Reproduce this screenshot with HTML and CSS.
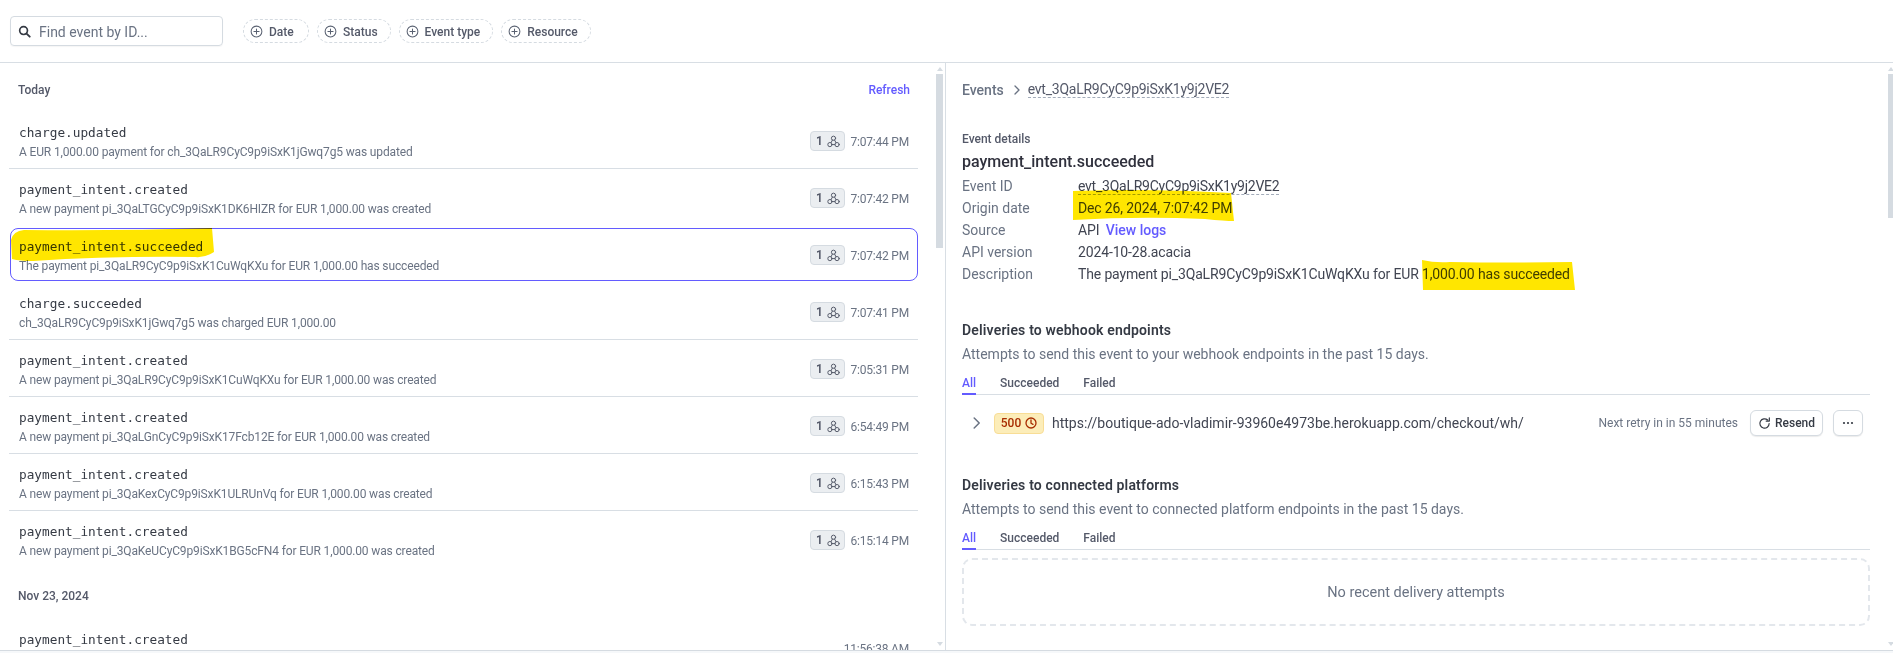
FILE: index.html
```html
<!DOCTYPE html>
<html lang="en">
<head>
<meta charset="utf-8">
<title>Events</title>
<link rel="stylesheet" href="styles.css">
</head>
<body>
<svg width="0" height="0" class="defs">
  <defs>
    <symbol id="hook" viewBox="0 0 16 16">
      <g fill="none" stroke="currentColor" stroke-width="1.2" stroke-linecap="round">
        <circle cx="8" cy="4" r="2.6"/>
        <circle cx="3.6" cy="11.8" r="2.6"/>
        <circle cx="12.4" cy="11.8" r="2.6"/>
        <path d="M6.7 6.2 4.9 9.5M9.3 6.2l1.8 3.3M6.2 11.8h3.6"/>
      </g>
    </symbol>
    <symbol id="plus" viewBox="0 0 14 14">
      <g fill="none" stroke="currentColor" stroke-width="1.1" stroke-linecap="round">
        <circle cx="7" cy="7" r="5.8"/>
        <path d="M7 4.2v5.6M4.2 7h5.6"/>
      </g>
    </symbol>
  </defs>
</svg>

<div class="app">
  <header class="topbar">
    <label class="search">
      <svg class="search-icon" viewBox="0 0 14 14"><circle cx="6" cy="6" r="4.2" fill="none" stroke="currentColor" stroke-width="1.8"/><path d="M9.2 9.2 12.6 12.6" stroke="currentColor" stroke-width="2" stroke-linecap="round"/></svg>
      <span class="search-placeholder">Find event by ID...</span>
    </label>
    <div class="chips">
      <span class="chip chip-date"><svg class="chip-icon"><use href="#plus"/></svg>Date</span>
      <span class="chip"><svg class="chip-icon"><use href="#plus"/></svg>Status</span>
      <span class="chip"><svg class="chip-icon"><use href="#plus"/></svg>Event type</span>
      <span class="chip"><svg class="chip-icon"><use href="#plus"/></svg>Resource</span>
    </div>
  </header>

  <main class="panes">
    <section class="pane-left">
      <div class="list">
        <div class="group-head"><span>Today</span><a class="link refresh">Refresh</a></div>

        <article class="row">
          <div class="row-text"><div class="evt">charge.updated</div><div class="desc">A EUR 1,000.00 payment for ch_3QaLR9CyC9p9iSxK1jGwq7g5 was updated</div></div>
          <div class="row-meta"><span class="count">1<svg class="hook"><use href="#hook"/></svg></span><time>7:07:44 PM</time></div>
        </article>
        <article class="row row-plain">
          <div class="row-text"><div class="evt">payment_intent.created</div><div class="desc">A new payment pi_3QaLTGCyC9p9iSxK1DK6HIZR for EUR 1,000.00 was created</div></div>
          <div class="row-meta"><span class="count">1<svg class="hook"><use href="#hook"/></svg></span><time>7:07:42 PM</time></div>
        </article>
        <article class="row row-selected">
          <div class="row-text"><div class="evt">payment_intent.succeeded</div><div class="desc">The payment pi_3QaLR9CyC9p9iSxK1CuWqKXu for EUR 1,000.00 has succeeded</div></div>
          <div class="row-meta"><span class="count">1<svg class="hook"><use href="#hook"/></svg></span><time>7:07:42 PM</time></div>
        </article>
        <article class="row">
          <div class="row-text"><div class="evt">charge.succeeded</div><div class="desc">ch_3QaLR9CyC9p9iSxK1jGwq7g5 was charged EUR 1,000.00</div></div>
          <div class="row-meta"><span class="count">1<svg class="hook"><use href="#hook"/></svg></span><time>7:07:41 PM</time></div>
        </article>
        <article class="row">
          <div class="row-text"><div class="evt">payment_intent.created</div><div class="desc">A new payment pi_3QaLR9CyC9p9iSxK1CuWqKXu for EUR 1,000.00 was created</div></div>
          <div class="row-meta"><span class="count">1<svg class="hook"><use href="#hook"/></svg></span><time>7:05:31 PM</time></div>
        </article>
        <article class="row">
          <div class="row-text"><div class="evt">payment_intent.created</div><div class="desc">A new payment pi_3QaLGnCyC9p9iSxK17Fcb12E for EUR 1,000.00 was created</div></div>
          <div class="row-meta"><span class="count">1<svg class="hook"><use href="#hook"/></svg></span><time>6:54:49 PM</time></div>
        </article>
        <article class="row">
          <div class="row-text"><div class="evt">payment_intent.created</div><div class="desc">A new payment pi_3QaKexCyC9p9iSxK1ULRUnVq for EUR 1,000.00 was created</div></div>
          <div class="row-meta"><span class="count">1<svg class="hook"><use href="#hook"/></svg></span><time>6:15:43 PM</time></div>
        </article>
        <article class="row row-plain">
          <div class="row-text"><div class="evt">payment_intent.created</div><div class="desc">A new payment pi_3QaKeUCyC9p9iSxK1BG5cFN4 for EUR 1,000.00 was created</div></div>
          <div class="row-meta"><span class="count">1<svg class="hook"><use href="#hook"/></svg></span><time>6:15:14 PM</time></div>
        </article>

        <div class="group-head group-head-next"><span>Nov 23, 2024</span></div>

        <article class="row">
          <div class="row-text"><div class="evt">payment_intent.created</div></div>
          <div class="row-meta"><time>11:56:38 AM</time></div>
        </article>
      </div>
      <div class="scrollbar scrollbar-left">
        <i class="arrow-up"></i>
        <div class="thumb thumb-left"></div>
        <i class="arrow-down"></i>
      </div>
    </section>

    <section class="pane-right">
      <div class="detail">
        <nav class="crumbs">
          <span class="crumb-root">Events</span>
          <svg class="crumb-sep" viewBox="0 0 6 10"><path d="M1 1l4 4-4 4" fill="none" stroke="currentColor" stroke-width="1.3" stroke-linecap="round" stroke-linejoin="round"/></svg>
          <span class="dashed">evt_3QaLR9CyC9p9iSxK1y9j2VE2</span>
        </nav>

        <div class="eyebrow">Event details</div>
        <h1 class="detail-title">payment_intent.succeeded</h1>
        <dl class="facts">
          <dt>Event ID</dt><dd><span class="dashed">evt_3QaLR9CyC9p9iSxK1y9j2VE2</span></dd>
          <dt>Origin date</dt><dd>Dec 26, 2024, 7:07:42 PM</dd>
          <dt>Source</dt><dd>API <a class="link logs">View logs</a></dd>
          <dt>API version</dt><dd>2024-10-28.acacia</dd>
          <dt>Description</dt><dd>The payment pi_3QaLR9CyC9p9iSxK1CuWqKXu for EUR 1,000.00 has succeeded</dd>
        </dl>

        <h2 class="section-title section-first">Deliveries to webhook endpoints</h2>
        <p class="section-sub">Attempts to send this event to your webhook endpoints in the past 15 days.</p>
        <div class="tabs">
          <span class="tab tab-active">All</span><span class="tab">Succeeded</span><span class="tab">Failed</span>
        </div>
        <div class="delivery">
          <svg class="expand" viewBox="0 0 8 12"><path d="M1.2 1l5 5-5 5" fill="none" stroke="currentColor" stroke-width="1.5" stroke-linecap="round" stroke-linejoin="round"/></svg>
          <span class="status">500
            <svg class="clock" viewBox="0 0 12 12"><circle cx="6" cy="6" r="5" fill="none" stroke="currentColor" stroke-width="1.3"/><path d="M6 3v3.2l2 1.2" fill="none" stroke="currentColor" stroke-width="1.3" stroke-linecap="round"/></svg>
          </span>
          <span class="url">https://boutique-ado-vladimir-93960e4973be.herokuapp.com/checkout/wh/</span>
          <span class="retry">Next retry in in 55 minutes</span>
          <button class="btn btn-resend">
            <svg class="resend-icon" viewBox="0 0 14 14"><path d="M12 7a5 5 0 1 1-1.6-3.7" fill="none" stroke="currentColor" stroke-width="1.3" stroke-linecap="round"/><path d="M12.2 1v3.4H8.8" fill="none" stroke="currentColor" stroke-width="1.3" stroke-linecap="round" stroke-linejoin="round"/></svg>Resend
          </button>
          <button class="btn btn-more"><svg class="more-icon" viewBox="0 0 12 4"><circle cx="2" cy="2" r="1.1"/><circle cx="6" cy="2" r="1.1"/><circle cx="10" cy="2" r="1.1"/></svg></button>
        </div>

        <h2 class="section-title section-second">Deliveries to connected platforms</h2>
        <p class="section-sub">Attempts to send this event to connected platform endpoints in the past 15 days.</p>
        <div class="tabs">
          <span class="tab tab-active">All</span><span class="tab">Succeeded</span><span class="tab">Failed</span>
        </div>
        <div class="empty">No recent delivery attempts</div>
      </div>
      <div class="scrollbar scrollbar-right">
        <i class="arrow-up"></i>
        <div class="thumb thumb-right"></div>
        <i class="arrow-down"></i>
      </div>
    </section>
  </main>
</div>

<svg class="marker" viewBox="0 0 1893 653" width="1893" height="653" aria-hidden="true">
  <path d="M11 240Q13 231 24 230Q120 231 212 228L214 252Q205 258 195 257Q110 256 33 261Q20 261 12 259Z"/>
  <path d="M1073 191Q1150 188 1231 193L1234 221Q1225 221 1205 219Q1140 216 1073 220Z"/>
  <path d="M1422 260Q1435 263 1450 262Q1510 263 1572 262L1575 290L1423 290Z"/>
</svg>
</body>
</html>
```

FILE: styles.css
```css
* { box-sizing: border-box; }

html, body { margin: 0; height: 653px; overflow: hidden; background: #f6f8fa; }

body {
  position: relative;
  font-family: Roboto, "Noto Sans", "Liberation Sans", sans-serif;
  font-size: 14px;
  color: #414552;
}

.defs { position: absolute; }

.app {
  height: 651px;
  background: #fff;
  border-bottom: 1px solid #d5dbe1;
  display: flex;
  flex-direction: column;
  overflow: hidden;
}

.topbar {
  flex: none;
  height: 63px;
  border-bottom: 1px solid #d8dee4;
  display: flex;
  align-items: flex-start;
  padding: 16px 0 0 10px;
}

.search {
  width: 213px;
  height: 30px;
  border: 1px solid #d5dbe1;
  border-radius: 4px;
  display: flex;
  align-items: center;
  padding-left: 7px;
  box-shadow: 0 1px 1px rgba(0, 0, 0, .04);
}

.search-icon { width: 13px; height: 13px; color: #353a44; }

.search-placeholder { margin-left: 8px; padding-top: 1px; color: #6a7383; font-size: 14px; }

.chips { display: flex; gap: 8px; margin: 3px 0 0 20px; }

.chip {
  height: 24px;
  border: 1px dashed #d5dbe1;
  border-radius: 12px;
  display: flex;
  align-items: center;
  gap: 6px;
  padding: 1px 12px 0 6px;
  font-size: 12px;
  font-weight: 500;
  color: #545969;
}

.chip-date { min-width: 66px; }

.chip-icon { width: 13px; height: 13px; color: #596171; }

.panes { flex: 1; min-height: 0; display: flex; }

.pane-left {
  width: 946px;
  flex: none;
  display: flex;
  border-right: 1px solid #d8dee4;
  padding-right: 2px;
}

.list {
  flex: 1;
  min-width: 0;
  padding: 0 18px 0 9px;
  overflow: hidden;
}

.group-head {
  height: 49px;
  padding: 4px 8px 0 9px;
  display: flex;
  align-items: center;
  justify-content: space-between;
  font-size: 12px;
  font-weight: 500;
  color: #545969;
}

.group-head-next { height: 51px; padding-top: 5px; }

.link { color: #635bff; font-weight: 500; }

.refresh { font-size: 12px; }

.row {
  height: 57px;
  padding: 12px 9px 0 10px;
  border-bottom: 1px solid #d8dee4;
  display: flex;
  justify-content: space-between;
}

.row-plain { border-bottom-color: transparent; }

.row-selected {
  height: 53px;
  margin: 2px 0 2px 1px;
  padding: 9px 8px 0 8px;
  border: 1px solid #635bff;
  border-radius: 8px;
}

.evt {
  font-family: "DejaVu Sans Mono", "Liberation Mono", monospace;
  font-size: 12.75px;
  line-height: 18px;
  color: #353a44;
}

.desc { font-size: 12px; letter-spacing: -.14px; line-height: 20px; color: #6a7383; }

.row-meta {
  display: flex;
  align-items: center;
  gap: 5px;
  height: 34px;
  font-size: 12px;
  color: #6a7383;
}

.row-meta time {
  min-width: 58px;
  padding-top: 1px;
  text-align: right;
  letter-spacing: -.2px;
  white-space: nowrap;
}

.count {
  width: 35px;
  height: 20px;
  border: 1px solid #d5dbe1;
  border-radius: 4px;
  background: #ebeef1;
  display: flex;
  align-items: center;
  justify-content: center;
  gap: 4px;
  font-weight: 600;
  color: #545969;
}

.hook { width: 13px; height: 13px; color: #545969; }

.scrollbar {
  flex: none;
  display: flex;
  flex-direction: column;
  align-items: center;
  padding-top: 4px;
  height: 100%;
}

.scrollbar-left { width: 7px; }

.scrollbar-right { width: 5px; overflow: hidden; }

.arrow-up, .arrow-down {
  display: block;
  width: 0;
  height: 0;
  border-left: 3px solid transparent;
  border-right: 3px solid transparent;
  flex: none;
}

.arrow-up { border-bottom: 4px solid #d5dbe1; }

.arrow-down { border-top: 4px solid #d5dbe1; margin-top: auto; margin-bottom: 4px; }

.thumb { flex: none; width: 100%; margin-top: 3px; background: #d5dbe1; }

.thumb-left { height: 174px; }

.thumb-right { height: 144px; }

.pane-right { flex: 1; min-width: 0; display: flex; }

.detail { flex: 1; min-width: 0; padding: 16px 18px 0 16px; }

.crumbs { display: flex; align-items: center; height: 20px; padding-top: 1px; color: #545969; }

.crumb-root { font-weight: 500; color: #6a7383; }

.crumb-sep { width: 6px; height: 10px; margin: 0 8px 0 10px; color: #6a7383; }

.dashed { border-bottom: 1px dashed #a3acba; line-height: 16px; letter-spacing: -.25px; display: inline-block; }

.eyebrow {
  margin-top: 32px;
  font-size: 12px;
  font-weight: 500;
  line-height: 16px;
  color: #545969;
}

.detail-title {
  margin: 5px 0 0;
  font-size: 16px;
  line-height: 20px;
  font-weight: 500;
  color: #30313d;
}

.facts {
  margin: 3px 0 0;
  display: grid;
  grid-template-columns: 116px 1fr;
  grid-auto-rows: 22px;
  align-items: center;
}

.facts dt { color: #6a7383; }

.facts dd { margin: 0; letter-spacing: -.14px; color: #414552; }

.facts .logs { margin-left: 3px; letter-spacing: 0; }

.section-title {
  margin: 0;
  font-size: 14px;
  letter-spacing: .17px;
  line-height: 20px;
  font-weight: 600;
  color: #353a44;
}

.section-first { margin-top: 35px; }

.section-second { margin-top: 39px; }

.section-sub { margin: 4px 0 0; line-height: 20px; color: #6a7383; }

.tabs {
  margin-top: 9px;
  height: 22px;
  display: flex;
  gap: 24px;
  border-bottom: 1px solid #d8dee4;
}

.tab {
  height: 22px;
  font-size: 12px;
  font-weight: 500;
  line-height: 20px;
  color: #545969;
}

.tab-active { color: #635bff; border-bottom: 2px solid #635bff; }

.delivery { margin-top: 15px; height: 26px; display: flex; align-items: center; padding-left: 11px; }

.expand { width: 8px; height: 12px; color: #6a7383; }

.status {
  width: 50px;
  height: 21px;
  margin-left: 13px;
  border: 1px solid #f8dd96;
  border-radius: 4px;
  background: #fcedb9;
  display: flex;
  align-items: center;
  justify-content: center;
  gap: 4px;
  font-size: 12px;
  font-weight: 500;
  color: #a82c00;
}

.clock { width: 12px; height: 12px; }

.url { margin-left: 8px; color: #414552; }

.retry { margin-left: auto; font-size: 12px; color: #6a7383; }

.btn {
  height: 26px;
  padding: 0;
  border: 1px solid #d5dbe1;
  border-radius: 6px;
  background: #fff;
  box-shadow: 0 1px 1px rgba(0, 0, 0, .08);
  display: flex;
  align-items: center;
  justify-content: center;
  font-family: inherit;
  font-size: 12px;
  font-weight: 500;
  color: #353a44;
}

.btn-resend { width: 73px; gap: 4px; margin-left: 12px; }

.resend-icon { width: 13px; height: 13px; }

.btn-more { width: 30px; margin-left: 10px; margin-right: 7px; }

.more-icon { width: 12px; height: 4px; fill: #353a44; }

.empty {
  margin-top: 8px;
  height: 68px;
  border: 2px dashed #e3e7ec;
  border-radius: 10px;
  display: flex;
  align-items: center;
  justify-content: center;
  font-size: 14.5px;
  color: #6a7383;
}

.marker {
  position: absolute;
  left: 0;
  top: 0;
  fill: #ffe600;
  mix-blend-mode: multiply;
  pointer-events: none;
}
```
